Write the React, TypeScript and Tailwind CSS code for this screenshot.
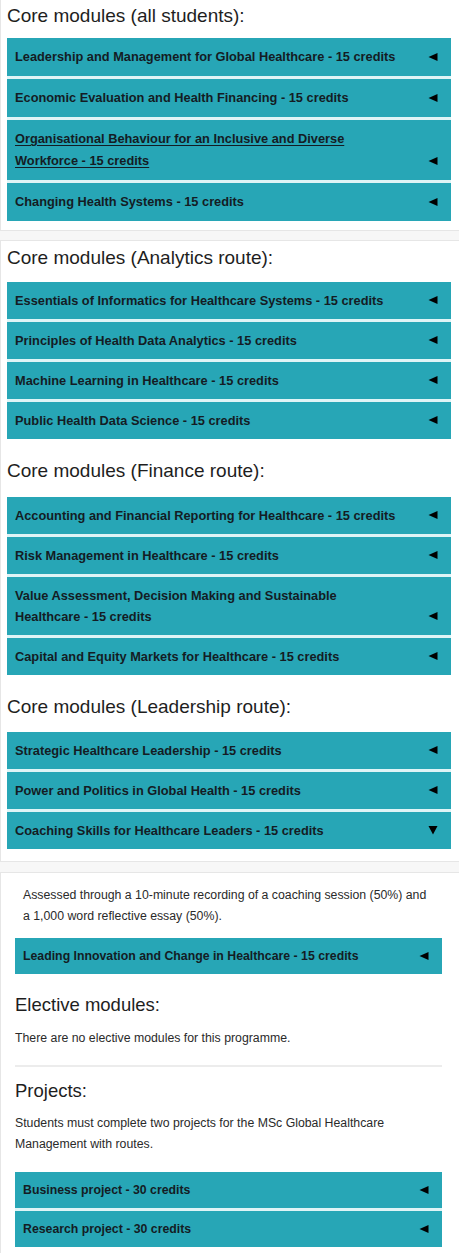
import type { ReactNode } from "react";

type Mod = { title: string; open?: boolean; underline?: boolean };

const allStudents: Mod[] = [
  { title: "Leadership and Management for Global Healthcare - 15 credits" },
  { title: "Economic Evaluation and Health Financing - 15 credits" },
  { title: "Organisational Behaviour for an Inclusive and Diverse Workforce - 15 credits", underline: true },
  { title: "Changing Health Systems - 15 credits" },
];

const analytics: Mod[] = [
  { title: "Essentials of Informatics for Healthcare Systems - 15 credits" },
  { title: "Principles of Health Data Analytics - 15 credits" },
  { title: "Machine Learning in Healthcare - 15 credits" },
  { title: "Public Health Data Science - 15 credits" },
];

const finance: Mod[] = [
  { title: "Accounting and Financial Reporting for Healthcare - 15 credits" },
  { title: "Risk Management in Healthcare - 15 credits" },
  { title: "Value Assessment, Decision Making and Sustainable Healthcare - 15 credits" },
  { title: "Capital and Equity Markets for Healthcare - 15 credits" },
];

const leadership: Mod[] = [
  { title: "Strategic Healthcare Leadership - 15 credits" },
  { title: "Power and Politics in Global Health - 15 credits" },
  { title: "Coaching Skills for Healthcare Leaders - 15 credits", open: true },
];

function Arrow({ open }: { open?: boolean }) {
  return open ? (
    <svg width="10" height="10" viewBox="0 0 10 10" className="shrink-0 mb-[6px]">
      <polygon points="0.5,1 9.5,1 5,9.5" fill="#000" />
    </svg>
  ) : (
    <svg width="10" height="10" viewBox="0 0 10 10" className="shrink-0 mb-[6px]">
      <polygon points="9.5,1 9.5,9 0.5,5" fill="#000" />
    </svg>
  );
}

function Bar({ m, lh }: { m: Mod; lh: string }) {
  return (
    <div className={"flex items-end justify-between bg-[#27a6b6] pl-2 pr-[13px] py-2 text-[12.8px] font-bold text-[#141c24] " + lh}>
      <span className={m.underline ? "underline underline-offset-2 pr-6" : "pr-6"}>{m.title}</span>
      <Arrow open={m.open} />
    </div>
  );
}

function Group({ title, mods, gap, lh = "leading-[21px]" }: { title: string; mods: Mod[]; gap: string; lh?: string }) {
  return (
    <div>
      <h3 className={"text-[19px] leading-[24px] text-[#1e1e1e] " + gap}>{title}</h3>
      <div className="flex flex-col gap-[3px] bg-[#dff4f6] w-[444px]">
        {mods.map((m) => (
          <Bar key={m.title} m={m} lh={lh} />
        ))}
      </div>
    </div>
  );
}

function Panel({ children, className }: { children: ReactNode; className: string }) {
  return <div className={"bg-white border-l border-b border-t border-[#e6e6e6] " + className}>{children}</div>;
}

function SmallBar({ title }: { title: string }) {
  return (
    <div className="flex items-center justify-between bg-[#27a6b6] pl-2 pr-[13px] h-[36px] text-[12.3px] font-bold text-[#141c24]">
      <span>{title}</span>
      <svg width="10" height="10" viewBox="0 0 10 10">
        <polygon points="9.5,1 9.5,9 0.5,5" fill="#000" />
      </svg>
    </div>
  );
}

export default function App() {
  return (
    <div className="w-[459px] bg-[#f7f7f7] font-['Liberation_Sans',Arial,sans-serif]">
      <Panel className="border-t-0 pl-[6px] pt-[4px] pb-[9px]">
        <Group title="Core modules (all students):" mods={allStudents} gap="mb-[10px]" lh="leading-[22px]" />
      </Panel>
      <div className="h-[9px]" />
      <Panel className="pl-[6px] pt-[5px] pb-[12px] flex flex-col gap-[20px]">
        <Group title="Core modules (Analytics route):" mods={analytics} gap="mb-[12px]" />
        <Group title="Core modules (Finance route):" mods={finance} gap="mb-[14px]" />
        <Group title="Core modules (Leadership route):" mods={leadership} gap="mb-[13px]" />
      </Panel>
      <div className="h-[10px]" />
      <Panel className="border-b-0 pl-[14px] pr-[17px] pt-[12px] pb-[8px]">
        <p className="pl-[8px] pr-[6px] text-[12.3px] leading-[21px] text-[#2a2a2a]">
          Assessed through a 10-minute recording of a coaching session (50%) and a 1,000 word reflective essay (50%).
        </p>
        <div className="mt-[11px]">
          <SmallBar title="Leading Innovation and Change in Healthcare - 15 credits" />
        </div>
        <h3 className="mt-[19px] text-[18.5px] leading-[24px] text-[#1e1e1e]">Elective modules:</h3>
        <p className="mt-[12px] text-[12.3px] leading-[18px] text-[#2a2a2a]">There are no elective modules for this programme.</p>
        <hr className="mt-[18px] border-t-2 border-[#ececec]" />
        <h3 className="mt-[12px] text-[18.5px] leading-[24px] text-[#1e1e1e]">Projects:</h3>
        <p className="mt-[10px] text-[12.3px] leading-[21px] text-[#2a2a2a]">
          Students must complete two projects for the MSc Global Healthcare Management with routes.
        </p>
        <div className="mt-[17px] flex flex-col gap-[3px] bg-[#dff4f6]">
          <SmallBar title="Business project - 30 credits" />
          <SmallBar title="Research project - 30 credits" />
        </div>
      </Panel>
    </div>
  );
}
